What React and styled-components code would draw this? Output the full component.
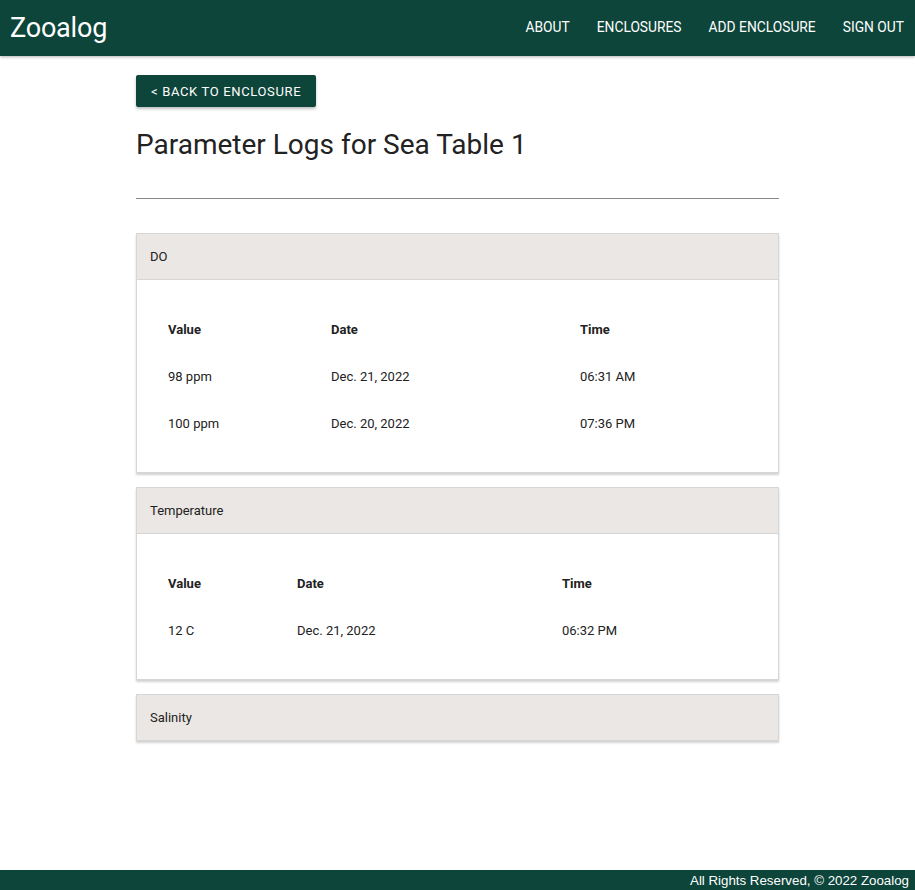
import React from 'react'
import styled, { createGlobalStyle } from 'styled-components'

const GlobalStyle = createGlobalStyle`
  html, body {
    margin: 0;
    padding: 0;
    background: #fff;
    font-family: Roboto, "Liberation Sans", Arial, sans-serif;
    color: #222;
  }
  #root {
    min-height: 890px;
    display: flex;
    flex-direction: column;
  }
`

const NavBar = styled.header`
  height: 56px;
  background: #0d453a;
  display: flex;
  align-items: center;
  justify-content: space-between;
  padding: 0 11px 0 10px;
  box-shadow: 0 1px 3px rgba(0, 0, 0, 0.3);
`
const Brand = styled.div`
  color: #fff;
  font-size: 27px;
  font-weight: 400;
  letter-spacing: -0.2px;
`
const Links = styled.nav`
  display: flex;
  gap: 27px;
  padding-bottom: 2px;
`
const NavLink = styled.a`
  color: #fff;
  font-size: 13.8px;
  font-weight: 400;
  text-transform: uppercase;
`

const Main = styled.main`
  flex: 1;
  width: 643px;
  margin: 0 auto;
  padding: 19px 0 40px 0;
`
const BackButton = styled.button`
  background: #0d453a;
  color: #fff;
  border: none;
  border-radius: 2px;
  height: 32px;
  padding: 0 15px;
  font-family: inherit;
  font-size: 13px;
  letter-spacing: 0.65px;
  text-transform: uppercase;
  box-shadow: 0 2px 3px rgba(0, 0, 0, 0.25);
`
const Title = styled.h1`
  margin: 21px 0 0 0;
  font-size: 28px;
  font-weight: 400;
  color: #222;
  line-height: 34px;
`
const Divider = styled.hr`
  margin: 36px 0 34px 0;
  border: none;
  border-top: 1px solid #8a8a8a;
`
const Cards = styled.div`
  display: flex;
  flex-direction: column;
  gap: 14px;
`
const Card = styled.section`
  border: 1px solid #d6d6d6;
  box-shadow: 0 2px 2px rgba(0, 0, 0, 0.18);
  background: #fff;
`
const CardHeader = styled.div`
  height: 45px;
  background: #ebe7e4;
  display: flex;
  align-items: center;
  padding-left: 13px;
  font-size: 13px;
  color: #222;
  border-bottom: ${p => (p.$open ? '1px solid #d6d6d6' : 'none')};
`
const CardBody = styled.div`
  padding: 26px 15px 25px 15px;
`
const Table = styled.div`
  display: grid;
  grid-template-columns: ${p => p.$cols};
`
const Cell = styled.div`
  height: 47px;
  display: flex;
  align-items: center;
  padding-left: 16px;
  font-size: 13px;
  font-weight: ${p => (p.$head ? 700 : 400)};
  color: #222;
`

const logs = [
  {
    name: 'DO',
    cols: '163px 249px 1fr',
    rows: [
      ['98 ppm', 'Dec. 21, 2022', '06:31 AM'],
      ['100 ppm', 'Dec. 20, 2022', '07:36 PM'],
    ],
  },
  {
    name: 'Temperature',
    cols: '129px 265px 1fr',
    rows: [['12 C', 'Dec. 21, 2022', '06:32 PM']],
  },
  { name: 'Salinity', rows: [] },
]

const Footer = styled.footer`
  height: 20px;
  background: #0d453a;
  color: #fff;
  font-size: 13.3px;
  display: flex;
  align-items: center;
  justify-content: flex-end;
  padding-right: 6px;
  font-family: "Liberation Sans", Arial, sans-serif;
`

export default function App() {
  return (
    <>
      <GlobalStyle />
      <NavBar>
        <Brand>Zooalog</Brand>
        <Links>
          <NavLink>About</NavLink>
          <NavLink>Enclosures</NavLink>
          <NavLink>Add Enclosure</NavLink>
          <NavLink>Sign Out</NavLink>
        </Links>
      </NavBar>
      <Main>
        <BackButton>&lt; Back to Enclosure</BackButton>
        <Title>Parameter Logs for Sea Table 1</Title>
        <Divider />
        <Cards>
          {logs.map(log => (
            <Card key={log.name}>
              <CardHeader $open={log.rows.length > 0}>{log.name}</CardHeader>
              {log.rows.length > 0 && (
                <CardBody>
                  <Table $cols={log.cols}>
                    <Cell $head>Value</Cell>
                    <Cell $head>Date</Cell>
                    <Cell $head>Time</Cell>
                    {log.rows.map(r => r.map((v, i) => <Cell key={r[0] + i}>{v}</Cell>))}
                  </Table>
                </CardBody>
              )}
            </Card>
          ))}
        </Cards>
      </Main>
      <Footer>All Rights Reserved, © 2022 Zooalog</Footer>
    </>
  )
}
